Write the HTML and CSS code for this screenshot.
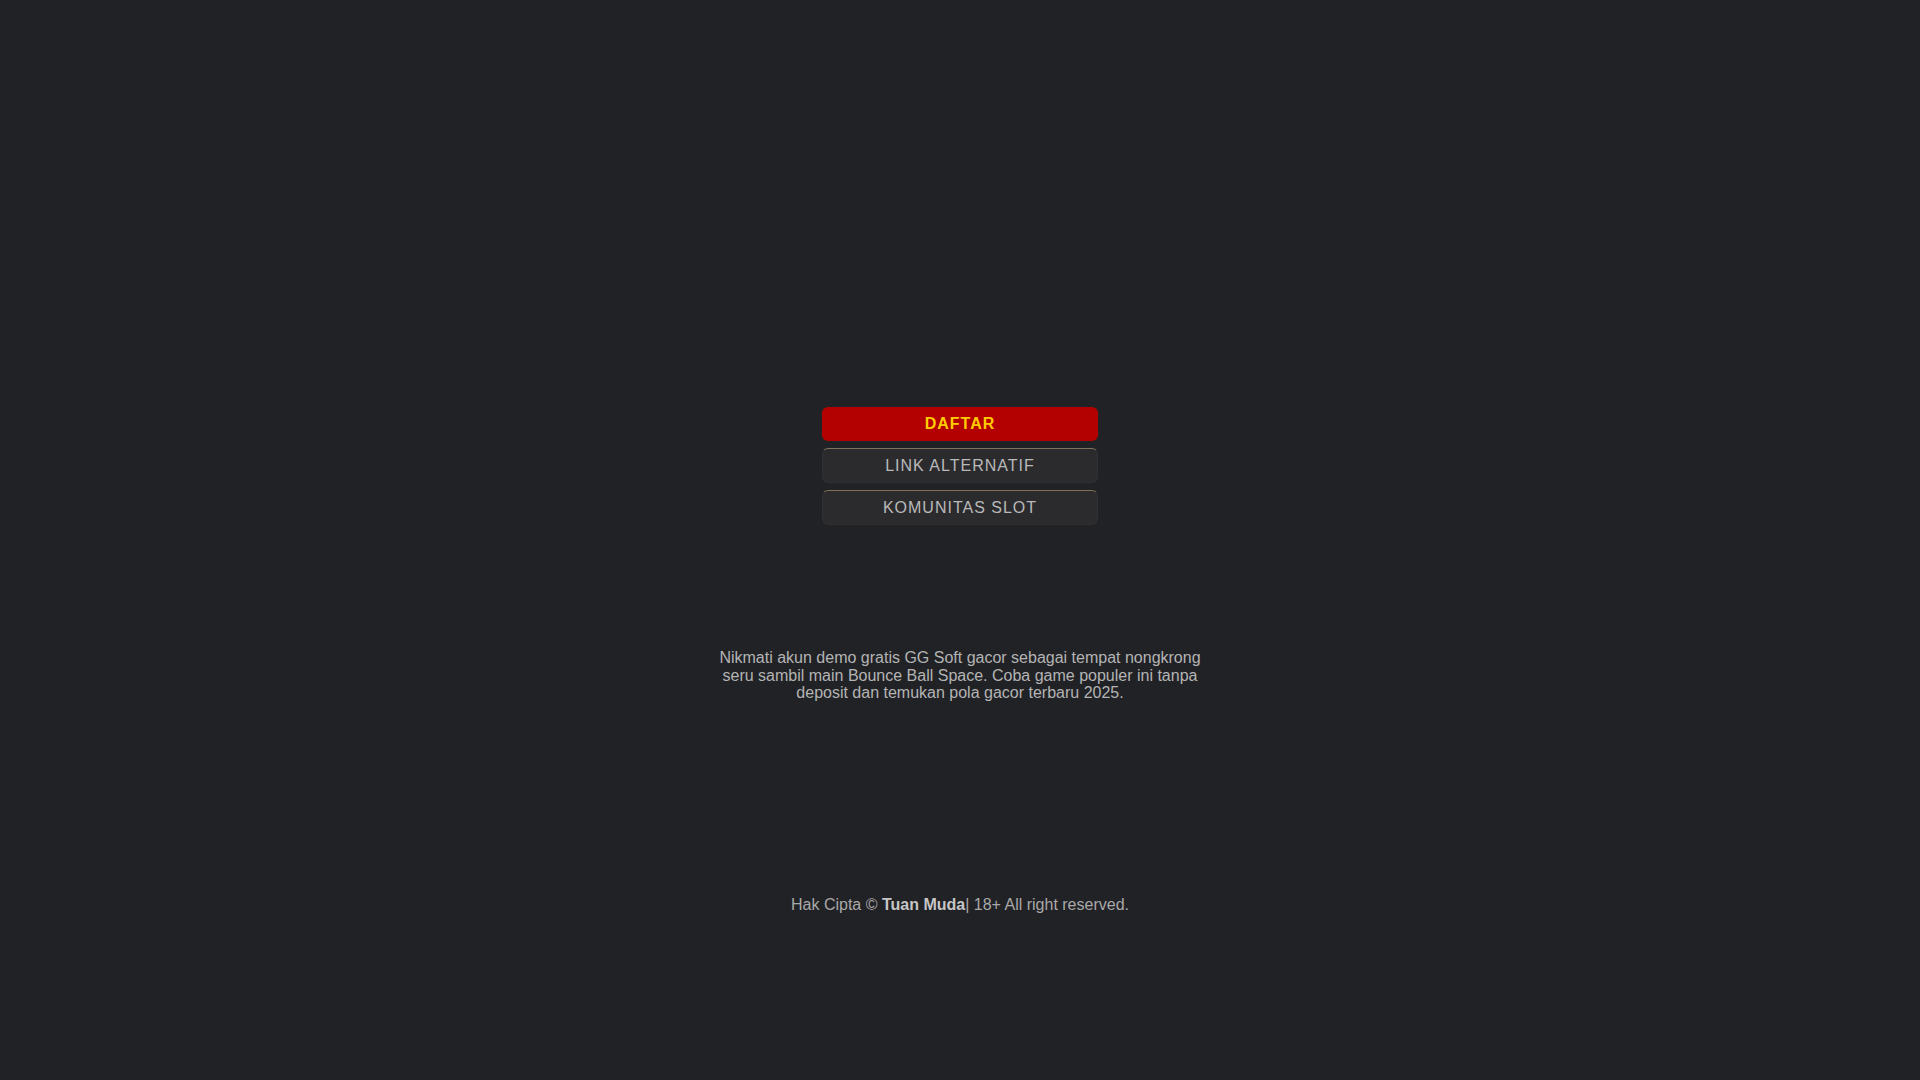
FILE: index.html
```html
<!DOCTYPE html>
<html lang="id">
<head>
<meta charset="utf-8">
<title>Tuan Muda</title>
<link rel="stylesheet" href="styles.css">
</head>
<body>
<main class="page">
  <nav class="buttons">
    <a class="btn btn-primary" href="#">DAFTAR</a>
    <a class="btn btn-dark" href="#">LINK ALTERNATIF</a>
    <a class="btn btn-dark" href="#">KOMUNITAS SLOT</a>
  </nav>
  <p class="desc">Nikmati akun demo gratis GG Soft gacor sebagai tempat nongkrong seru sambil main Bounce Ball Space. Coba game populer ini tanpa deposit dan temukan pola gacor terbaru 2025.</p>
  <footer class="footer">Hak Cipta © <strong>Tuan Muda</strong>| 18+ All right reserved.</footer>
</main>
</body>
</html>
```

FILE: styles.css
```css
html, body {
  margin: 0;
  padding: 0;
  background: #212226;
  font-family: "Liberation Sans", Arial, sans-serif;
  color: #b4b4b4;
}
.page {
  display: flex;
  flex-direction: column;
  align-items: center;
  min-height: 1080px;
  padding-top: 407px;
  box-sizing: border-box;
}
.buttons {
  width: 276px;
  display: flex;
  flex-direction: column;
  gap: 7px;
}
.btn {
  display: flex;
  align-items: center;
  justify-content: center;
  height: 34px;
  box-sizing: border-box;
  border-radius: 6px;
  font-size: 16px;
  letter-spacing: 1px;
  text-decoration: none;
}
.btn-primary {
  background: #b30000;
  color: #ffcc00;
  font-weight: bold;
}
.btn-dark {
  height: 35px;
  background: #2b2b2e;
  color: #b9b9b9;
  border: 1px solid #2f2f32;
  border-top-color: #80725a;
}
.desc {
  margin: 124px 0 0;
  width: 490px;
  text-align: center;
  font-size: 16px;
  line-height: 17.6px;
  color: #b4b4b4;
}
.footer {
  margin-top: 194px;
  font-size: 16px;
  color: #a9a9a9;
}
.footer strong {
  color: #c6c6c6;
}
```
